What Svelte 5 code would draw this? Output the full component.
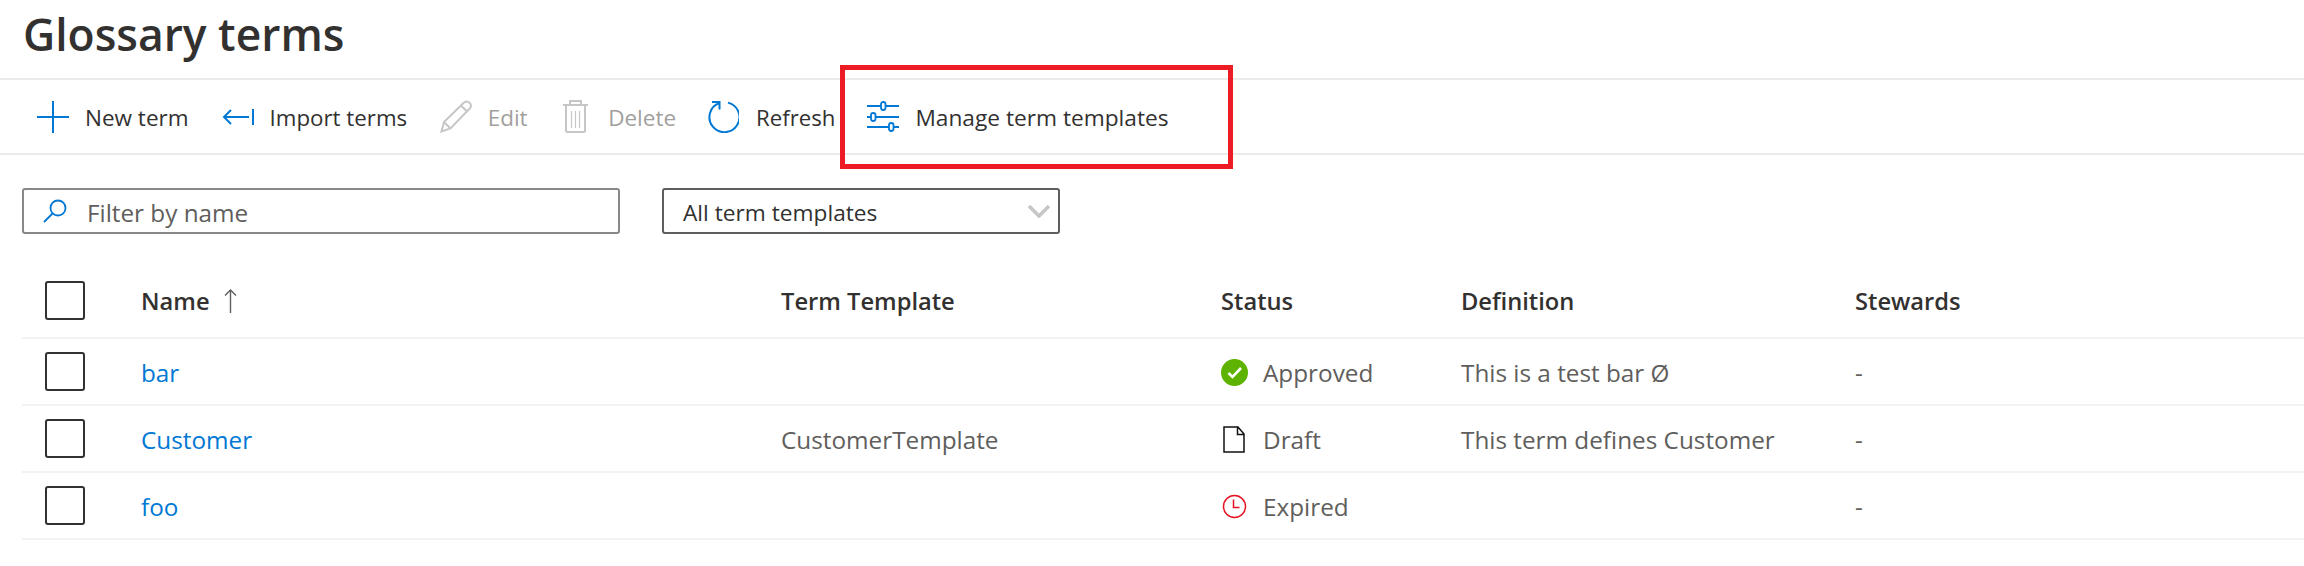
<script>
  const cols = ['Term Template', 'Status', 'Definition', 'Stewards'];
  const rows = [
    { name: 'bar', template: '', status: 'Approved', icon: 'ok', def: 'This is a test bar Ø' },
    { name: 'Customer', template: 'CustomerTemplate', status: 'Draft', icon: 'doc', def: 'This term defines Customer' },
    { name: 'foo', template: '', status: 'Expired', icon: 'clock', def: '' }
  ];
</script>

<div class="page">
  <h1>Glossary terms</h1>
  <div class="toolbar">
    <div class="btn b-new">
      <svg width="32" height="32" viewBox="0 0 32 32"><path d="M16 0v32M0 16h32" stroke="#0078d4" stroke-width="2" fill="none"/></svg>
      <span>New term</span>
    </div>
    <div class="btn b-import">
      <svg width="32" height="16" viewBox="0 0 32 16"><path d="M31 0v16M27 8H2M9 1L2 8l7 7" stroke="#0078d4" stroke-width="2" fill="none"/></svg>
      <span>Import terms</span>
    </div>
    <div class="btn b-edit dis">
      <svg width="33" height="33" viewBox="0 0 33 33"><path d="M1.500 31.500l2.500-9.500L23.500 3c2-2 4-2 6-.2s2 4 0 6L10.500 28.500zM4 22l6.500 6.500M21 5.500l6 6" stroke="#c8c6c4" stroke-width="2" fill="none"/></svg>
      <span>Edit</span>
    </div>
    <div class="btn b-del dis">
      <svg width="25" height="33" viewBox="0 0 25 33"><path d="M0 5h25M7 5V1h11v4M3 5v25.500q0 1.500 1.500 1.500h16q1.500 0 1.500-1.500V5" stroke="#c8c6c4" stroke-width="2" fill="none"/><path d="M8.500 11v17M12.500 11v17M16.500 11v17" stroke="#c8c6c4" stroke-width="1.200" fill="none"/></svg>
      <span>Delete</span>
    </div>
    <div class="btn b-ref">
      <svg width="33" height="33" viewBox="0 0 33 33"><path d="M13.500 3A15 15 0 1 0 22 2.600M6 2h7.500v7.500" stroke="#0078d4" stroke-width="2" fill="none"/></svg>
      <span>Refresh</span>
    </div>
    <div class="btn b-man">
      <svg width="32" height="32" viewBox="0 0 32 32"><path d="M0 5h14M19 5h13M0 16h4M9 16h23M0 26h22M27 26h5" stroke="#0078d4" stroke-width="2" fill="none"/><rect x="14" y="1" width="4.500" height="8" rx="2.200" stroke="#0078d4" stroke-width="1.800" fill="#fff"/><rect x="4" y="12" width="4.500" height="8" rx="2.200" stroke="#0078d4" stroke-width="1.800" fill="#fff"/><rect x="22" y="22" width="4.500" height="8" rx="2.200" stroke="#0078d4" stroke-width="1.800" fill="#fff"/></svg>
      <span>Manage term templates</span>
    </div>
  </div>

  <div class="filters">
    <div class="search">
      <svg width="24" height="24" viewBox="0 0 24 24"><circle cx="15" cy="9" r="7.500" stroke="#0078d4" stroke-width="1.800" fill="none"/><path d="M9.500 14.500L1 23" stroke="#0078d4" stroke-width="1.800"/></svg>
      <span>Filter by name</span>
    </div>
    <div class="select">
      <span>All term templates</span>
      <svg width="24" height="14" viewBox="0 0 24 14"><path d="M2 2l10 10L22 2" stroke="#c8c6c4" stroke-width="3.600" fill="none"/></svg>
    </div>
  </div>

  <div class="table">
    <div class="row head">
      <div class="cb-cell"><i class="cb"></i></div>
      <div class="name">Name <svg class="sort" width="13" height="24" viewBox="0 0 13 24"><path d="M6.500 24V1M1 6.500l5.500-5.500 5.500 5.500" stroke="#605e5c" stroke-width="1.400" fill="none"/></svg></div>
      {#each cols as c}<div>{c}</div>{/each}
    </div>
    {#each rows as r}
      <div class="row body">
        <div class="cb-cell"><i class="cb"></i></div>
        <div class="link">{r.name}</div>
        <div>{r.template}</div>
        <div class="status">
          {#if r.icon === 'ok'}
            <svg width="27" height="27" viewBox="0 0 27 27"><circle cx="13.500" cy="13.500" r="13.500" fill="#5db300"/><path d="M7.500 14l4 4 8.500-9" stroke="#fff" stroke-width="2.600" fill="none"/></svg>
          {:else if r.icon === 'doc'}
            <svg width="27" height="27" viewBox="0 0 27 27"><path d="M3 1h14l6 7v18H3zM16.500 1v7.500H23" stroke="#111" stroke-width="1.500" fill="none"/></svg>
          {:else}
            <svg width="27" height="27" viewBox="0 0 27 27"><circle cx="13.500" cy="13.500" r="11" stroke="#e81123" stroke-width="1.500" fill="none"/><path d="M12.500 6.500v8h6" stroke="#e81123" stroke-width="1.500" fill="none"/></svg>
          {/if}
          <span>{r.status}</span>
        </div>
        <div>{r.def}</div>
        <div>-</div>
      </div>
    {/each}
  </div>

  <div class="highlight"></div>
</div>

<style>
  :global(body) { margin: 0; background: #fff; }
  .page {
    position: relative;
    width: 2304px;
    height: 566px;
    overflow: hidden;
    font-family: "Open Sans", "Noto Sans", sans-serif;
    font-size: 24.300px;
    color: #323130;
  }
  h1 {
    margin: 0;
    padding: 3px 0 0 23px;
    height: 75px;
    font-size: 44.400px;
    line-height: 62px;
    font-weight: 600;
    border-bottom: 2px solid #edebe9;
  }
  .toolbar {
    height: 73px;
    display: flex;
    align-items: center;
    border-bottom: 2px solid #edebe9;
    font-size: 22.500px;
  }
  .btn { display: flex; align-items: center; gap: 16px; flex: none; }
  .btn span { padding-top: 2px; }
  .dis { color: #a19f9d; }
  .b-new { margin-left: 37px; }
  .b-import { margin-left: 33px; font-size: 22.300px; }
  .b-edit { margin-left: 32.500px; gap: 15px; }
  .b-del { margin-left: 35.500px; gap: 20px; }
  .b-ref { margin-left: 30px; font-size: 22.200px; gap: 17px; }
  .b-man { margin-left: 32px; font-size: 22.700px; }
  .filters { display: flex; gap: 42px; margin: 33px 0 0 22px; }
  .filters span { padding-top: 2px; }
  .search, .select {
    height: 46px;
    box-sizing: border-box;
    border: 2px solid #605e5c;
    border-radius: 3px;
    display: flex;
    align-items: center;
  }
  .search { width: 598px; padding-left: 19px; gap: 20px; color: #605e5c; border-color: #8a8886; }
  .select { width: 398px; padding: 0 7px 0 19px; justify-content: space-between; font-size: 22.700px; }
  .table { margin: 31px 0 0 22px; width: 2282px; }
  .row {
    display: grid;
    grid-template-columns: 119px 640px 440px 240px 394px 1fr;
    align-items: center;
    height: 65.200px;
    border-bottom: 2px solid #f3f2f1;
    color: #605e5c;
  }
  .body > div:not(.cb-cell) { padding-top: 2px; }
  .head { height: 71.500px; font-weight: 600; color: #323130; font-size: 23.700px; }
  .cb-cell { padding-left: 23px; display: flex; }
  .cb { width: 40px; height: 39px; box-sizing: border-box; border: 2px solid #323130; border-radius: 3px; display: block; }
  .name { display: flex; align-items: center; gap: 13px; }
  .sort { margin-left: 1px; }
  .link { color: #0078d4; }
  .status { display: flex; align-items: center; gap: 15px; }
  .highlight {
    position: absolute;
    left: 840px; top: 65px;
    width: 393px; height: 104px;
    box-sizing: border-box;
    border: 5px solid #ed1c24;
    pointer-events: none;
  }
</style>
